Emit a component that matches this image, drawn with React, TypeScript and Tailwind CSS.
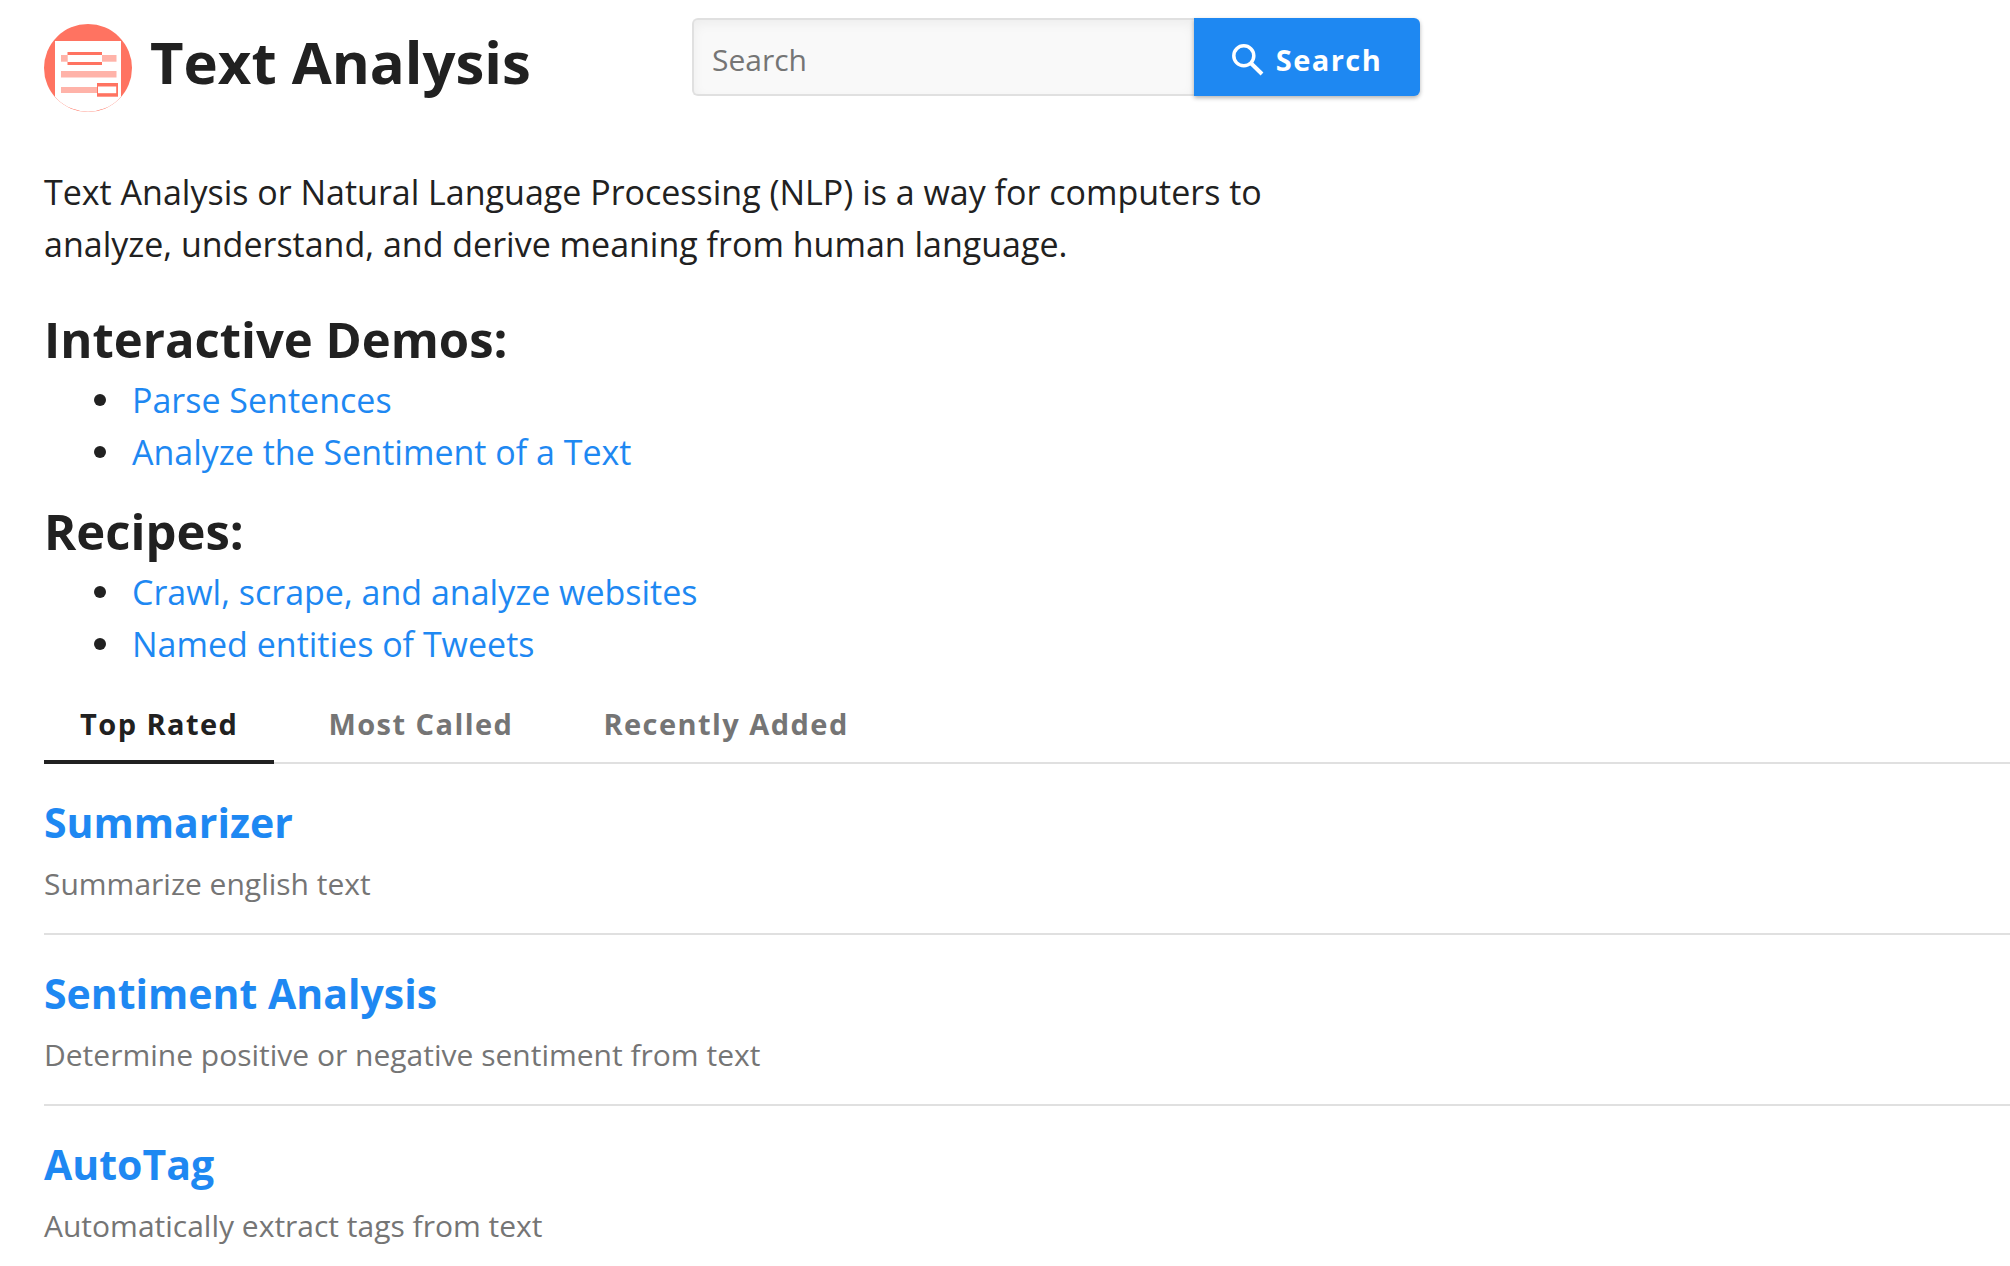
import { useState } from "react";

const demos = ["Parse Sentences", "Analyze the Sentiment of a Text"];

const recipes = ["Crawl, scrape, and analyze websites", "Named entities of Tweets"];

const tabs = ["Top Rated", "Most Called", "Recently Added"];

const algorithms = [
  { name: "Summarizer", description: "Summarize english text" },
  {
    name: "Sentiment Analysis",
    description: "Determine positive or negative sentiment from text",
  },
  { name: "AutoTag", description: "Automatically extract tags from text" },
];

function CategoryLogo() {
  return (
    <svg viewBox="0 0 88 88" className="w-[88px] h-[88px] shrink-0" aria-hidden="true">
      <defs>
        <clipPath id="logo-circle">
          <circle cx="44" cy="44" r="43.7" />
        </clipPath>
      </defs>
      <circle cx="44" cy="44" r="44" fill="#ff7361" />
      <rect x="11" y="17" width="66" height="71" fill="#fff" clipPath="url(#logo-circle)" />
      <g fill="#ffb3a9">
        <rect x="17" y="31" width="55.5" height="6.7" />
        <rect x="17" y="47" width="55.5" height="6.5" />
        <rect x="17" y="63" width="36" height="6" />
      </g>
      <rect x="23.5" y="28" width="34.5" height="13" fill="#ff7361" />
      <rect x="23.5" y="31" width="34.5" height="7" fill="#fff" />
      <rect x="53" y="59" width="21" height="13.7" fill="#ff7361" />
      <rect x="54" y="62.5" width="18.2" height="6.7" fill="#fff" />
    </svg>
  );
}

function SearchIcon() {
  return (
    <svg viewBox="0 0 32 32" className="w-8 h-8" aria-hidden="true">
      <circle cx="11.8" cy="11.8" r="10" fill="none" stroke="currentColor" strokeWidth="3.5" />
      <path d="M19 19.2 30 30" stroke="currentColor" strokeWidth="4" />
    </svg>
  );
}

function LinkSection({ title, items }: { title: string; items: string[] }) {
  return (
    <section>
      <h2 className="text-[49px] leading-[69px] font-bold">{title}</h2>
      <ul>
        {items.map((item) => (
          <li key={item} className="flex items-center pl-[50px] text-[34px] leading-[52px]">
            <span className="w-3 h-3 mr-[26px] rounded-full bg-[#212121]" />
            <a href="#" className="text-[#1e88f2] hover:underline">
              {item}
            </a>
          </li>
        ))}
      </ul>
    </section>
  );
}

export default function App() {
  const [activeTab, setActiveTab] = useState("Top Rated");

  return (
    <div className="min-h-screen bg-white pl-11 pt-[18px] font-['Open_Sans',sans-serif] text-[#212121]">
      {/* Header */}
      <header className="flex items-start">
        <div className="flex w-[648px] shrink-0 gap-[18px] pt-1.5">
          <CategoryLogo />
          <h1 className="text-[58px] leading-[76px] font-bold whitespace-nowrap">
            Text Analysis
          </h1>
        </div>

        <form
          className="flex h-[78px] w-full max-w-[728px]"
          onSubmit={(e) => e.preventDefault()}
        >
          <input
            type="text"
            aria-label="Search"
            placeholder="Search"
            className="min-w-0 flex-1 rounded-l-md border-2 border-r-0 border-[#e0e0e0] bg-[#f9f9f9] px-[18px] pt-1 text-[30px] shadow-[inset_0_4px_12px_rgba(0,0,0,0.05)] outline-none placeholder:text-[#757575]"
          />
          <button
            type="submit"
            className="flex w-[226px] shrink-0 items-center justify-center gap-3 rounded-r-md bg-[#1e88f2] pt-1.5 text-[29px] font-bold tracking-wider text-white shadow-[0_2px_4px_rgba(0,0,0,0.3)]"
          >
            <SearchIcon />
            Search
          </button>
        </form>
      </header>

      {/* Intro */}
      <p className="mt-[54px] mb-[35px] max-w-[1300px] text-[34px] leading-[52px]">
        Text Analysis or Natural Language Processing (NLP) is a way for computers to analyze,
        understand, and derive meaning from human language.
      </p>

      <div className="flex flex-col gap-[19px]">
        <LinkSection title="Interactive Demos:" items={demos} />
        <LinkSection title="Recipes:" items={recipes} />
      </div>

      {/* Tabs */}
      <div role="tablist" className="mt-3.5 flex gap-[18px] border-b-2 border-[#e0e0e0]">
        {tabs.map((tab) => (
          <button
            key={tab}
            type="button"
            role="tab"
            aria-selected={tab === activeTab}
            onClick={() => setActiveTab(tab)}
            className={`-mb-0.5 border-b-4 px-9 pt-5 pb-4 text-[29px] leading-10 font-bold tracking-wider ${
              tab === activeTab
                ? "border-[#212121] text-[#212121]"
                : "border-transparent text-[#757575]"
            }`}
          >
            {tab}
          </button>
        ))}
      </div>

      {/* Algorithms */}
      <ul>
        {algorithms.map((algo) => (
          <li key={algo.name} className="border-b-2 border-[#e0e0e0] pt-[30px] pb-[27px]">
            <h3 className="text-[41px] leading-[56px] font-bold">
              <a href="#" className="text-[#1e88f2] hover:underline">
                {algo.name}
              </a>
            </h3>
            <p className="mt-3 text-[30px] leading-[44px] text-[#757575]">{algo.description}</p>
          </li>
        ))}
      </ul>
    </div>
  );
}
